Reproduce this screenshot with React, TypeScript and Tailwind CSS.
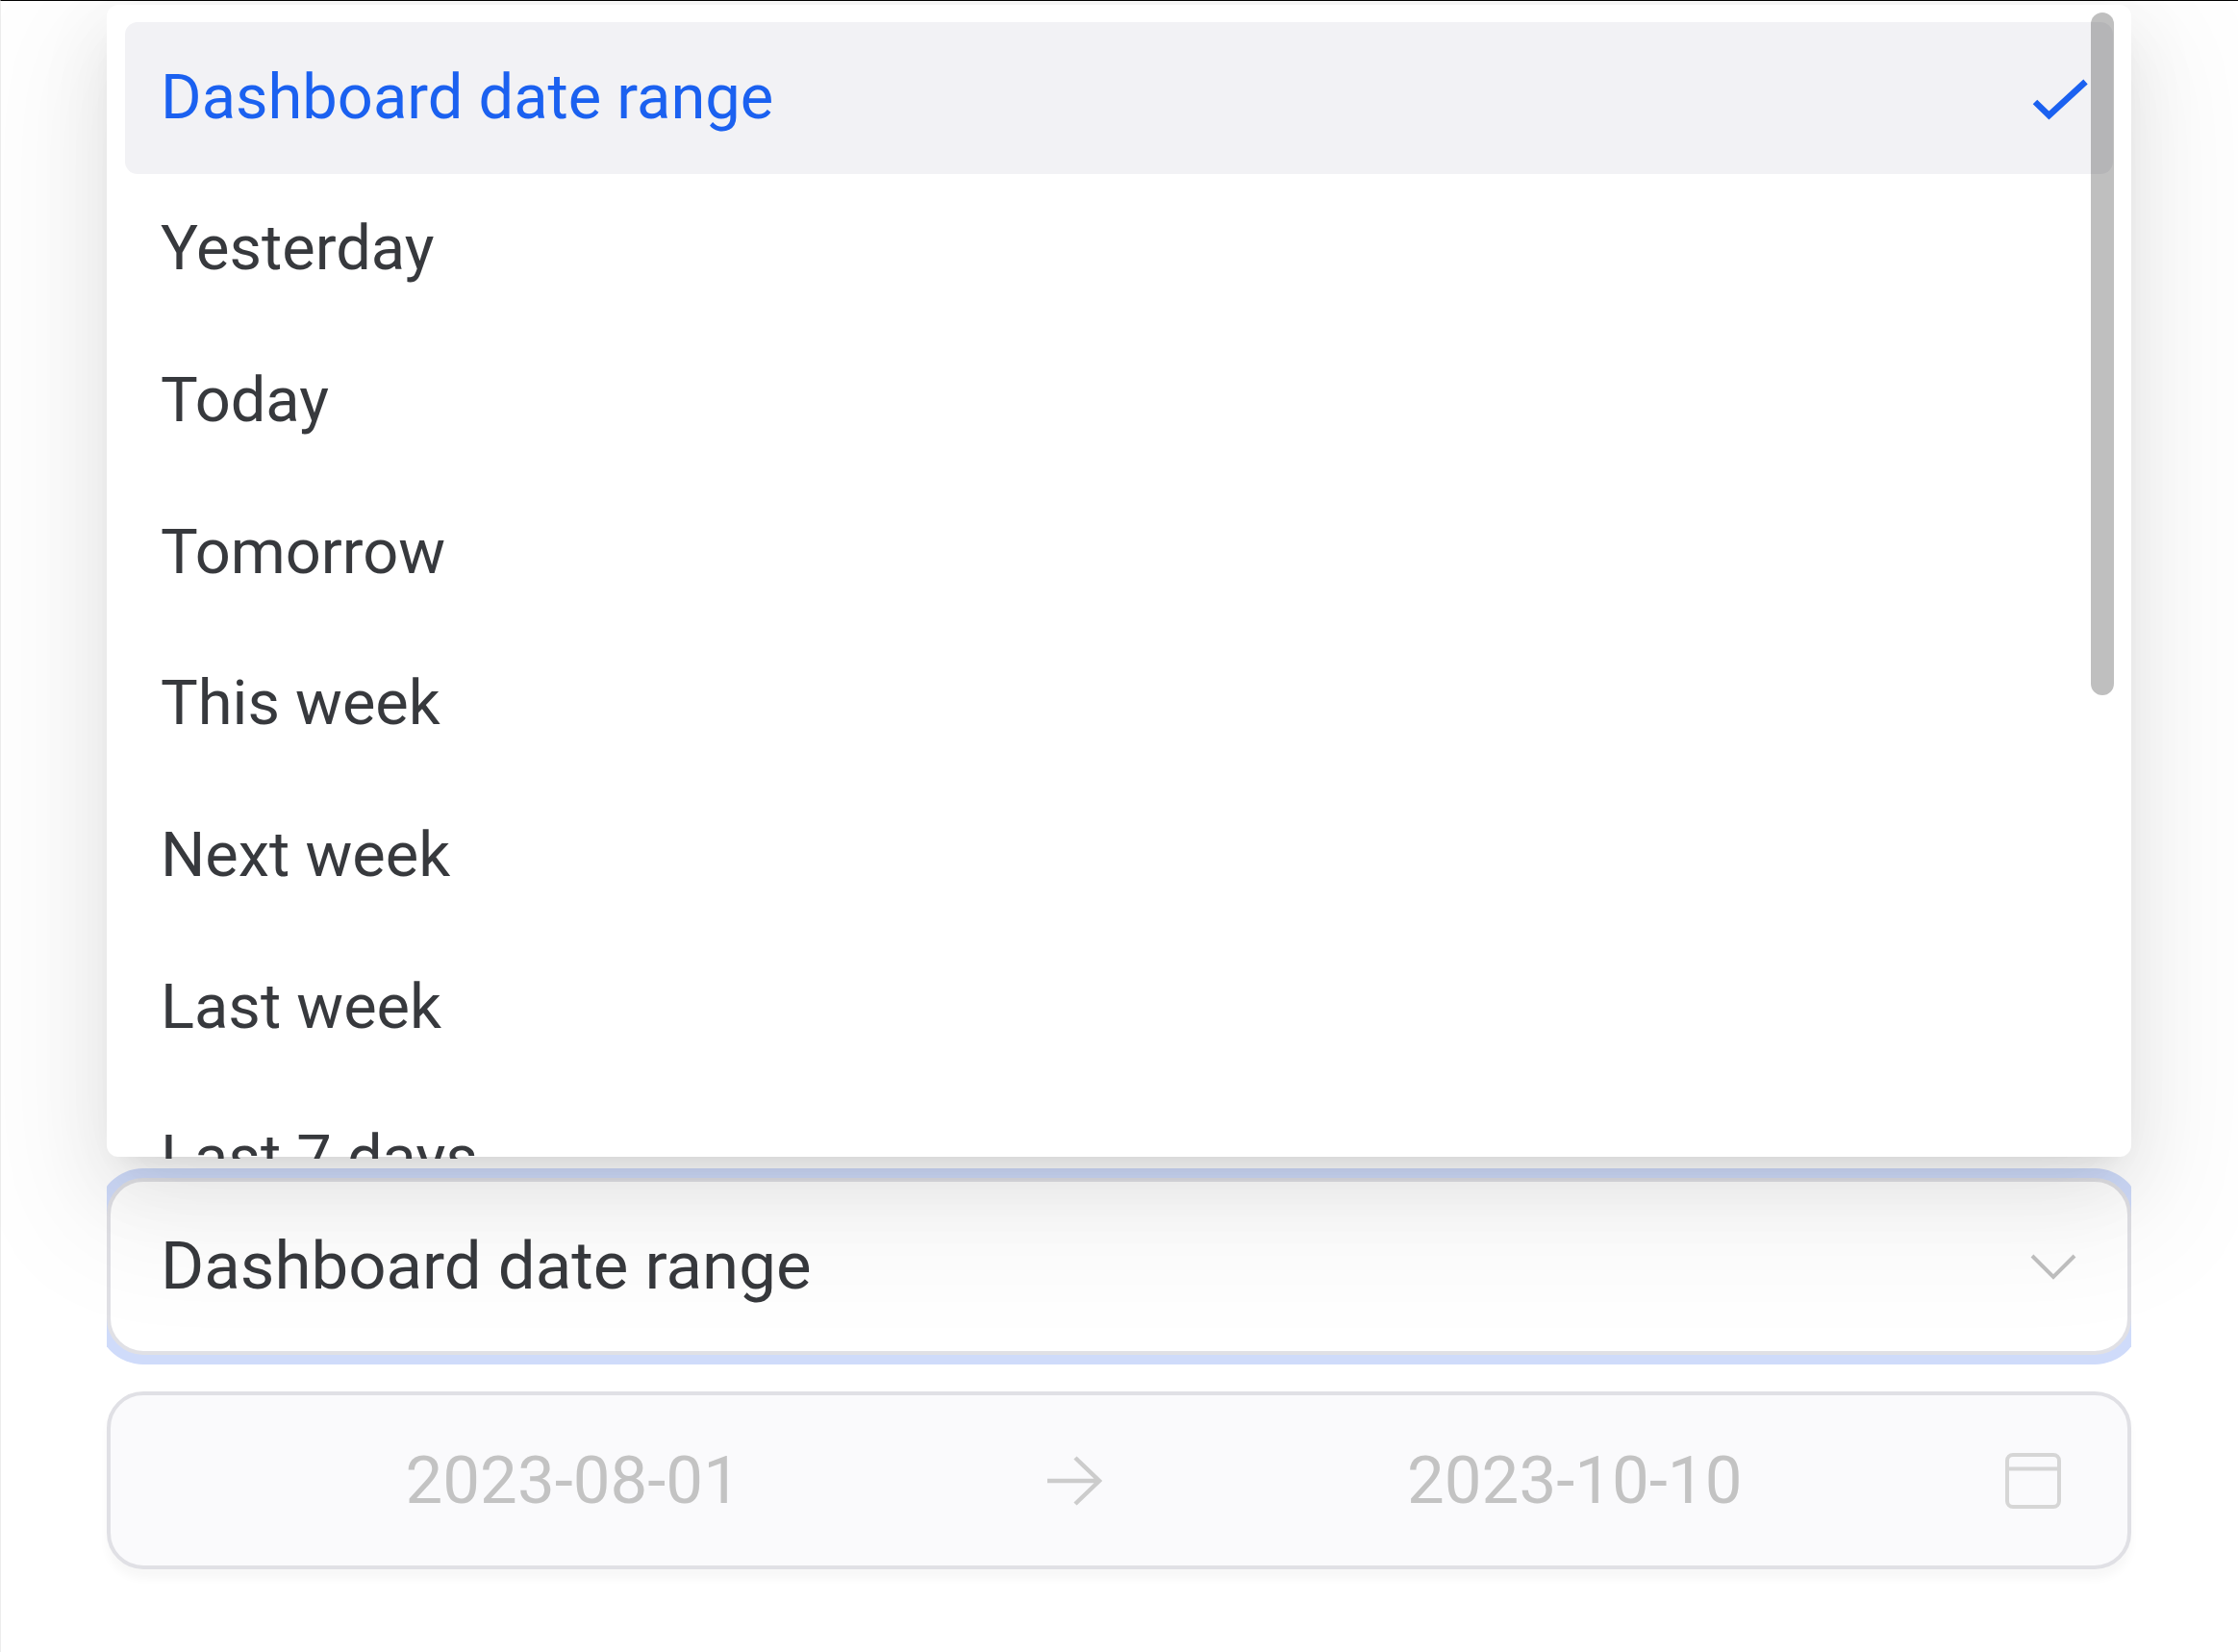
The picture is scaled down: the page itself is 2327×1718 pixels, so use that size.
import { useState } from 'react'
import { clsx } from 'clsx'

const ranges = [
  'Dashboard date range',
  'Yesterday',
  'Today',
  'Tomorrow',
  'This week',
  'Next week',
  'Last week',
  'Last 7 days',
]

function CheckIcon() {
  return (
    <svg className="w-[60px] h-[48px] shrink-0" viewBox="0 0 60 48" fill="none" stroke="#1b61f0" strokeWidth="6.5" aria-hidden="true">
      <path d="M3 29 17.5 43 55.5 8" />
    </svg>
  )
}

function ChevronIcon() {
  return (
    <svg className="w-[48px] h-[28px]" viewBox="0 0 48 28" fill="none" stroke="#c0c0c0" strokeWidth="4" aria-hidden="true">
      <path d="M2 3 24 25 46 3" />
    </svg>
  )
}

function ArrowIcon() {
  return (
    <svg className="w-[58px] h-[52px]" viewBox="0 0 58 52" fill="none" stroke="#cccccc" strokeWidth="4.5" aria-hidden="true">
      <path d="M1 26H54M30 2 55 26 30 50" />
    </svg>
  )
}

function CalendarIcon() {
  return (
    <svg className="w-[58px] h-[58px]" viewBox="0 0 58 58" fill="none" stroke="#d6d6d6" strokeWidth="4" aria-hidden="true">
      <rect x="2" y="2" width="54" height="54" rx="6" />
      <path d="M2 16.5H56" />
    </svg>
  )
}

type MenuProps = {
  value: string
  onSelect: (value: string) => void
}

function RangeMenu({ value, onSelect }: MenuProps) {
  return (
    <div className="relative z-10 h-[1198px] rounded-[12px] bg-white px-[19px] pt-[18px] shadow-[0_29px_78px_0_rgba(0,0,0,0.08),0_15px_29px_-19px_rgba(0,0,0,0.12),0_44px_136px_39px_rgba(0,0,0,0.05)]">
      <div className="h-[1182px] overflow-hidden">
        <div role="listbox" aria-label="Date range options" className="grid h-[1261px] grid-rows-8">
          {ranges.map((r) => (
            <button
              key={r}
              type="button"
              role="option"
              aria-selected={r === value}
              onClick={() => onSelect(r)}
              className={clsx(
                'flex items-center justify-between rounded-[13px] pb-px pl-[37px] pr-6 text-left text-[65px] leading-none',
                r === value ? 'bg-[#f2f2f5] text-[#1b61f0]' : 'text-[#37393d]',
              )}
            >
              {r}
              {r === value && <CheckIcon />}
            </button>
          ))}
        </div>
      </div>
      {/* Scrollbar thumb */}
      <div className="absolute right-[18px] top-2 h-[710px] w-6 rounded-full bg-black/25" />
    </div>
  )
}

export default function App() {
  const [range, setRange] = useState(ranges[0])

  return (
    <main className="min-h-screen border-t border-l border-t-black border-l-[#ececec] bg-white pt-1 pr-[111px] pb-[86px] pl-[110px] font-[Roboto,sans-serif] text-[#37393d]">
      <RangeMenu value={range} onSelect={setRange} />

      {/* Focus ring is cut at the sides of the column */}
      <div className="mt-[22px] overflow-x-clip">
        <div className="relative">
          <select
            aria-label="Date range"
            value={range}
            onChange={(e) => setRange(e.target.value)}
            className="block h-[184px] w-full appearance-none rounded-[38px] border-4 border-[#e0e0e5] bg-white pl-[52px] pr-[120px] text-[69px] shadow-[0_0_0_10px_#cfdbfa] outline-none"
          >
            {ranges.map((r) => (
              <option key={r}>{r}</option>
            ))}
          </select>
          <div className="pointer-events-none absolute inset-y-0 right-[57px] flex items-center">
            <ChevronIcon />
          </div>
        </div>
      </div>

      <div className="mt-[38px] flex h-[185px] items-center rounded-[38px] border-4 border-[#e0e0e5] bg-[#fafafc] pl-[57px] pr-[69px] text-[69px] text-[#c3c3c3] shadow-[0_10px_10px_0_rgba(0,0,0,0.03)]">
        <input aria-label="Start date" className="min-w-0 flex-1 bg-transparent text-center" defaultValue="2023-08-01" disabled />
        <div className="flex w-[194px] justify-center">
          <ArrowIcon />
        </div>
        <input aria-label="End date" className="min-w-0 flex-1 bg-transparent text-center" defaultValue="2023-10-10" disabled />
        <div className="ml-6">
          <CalendarIcon />
        </div>
      </div>
    </main>
  )
}
